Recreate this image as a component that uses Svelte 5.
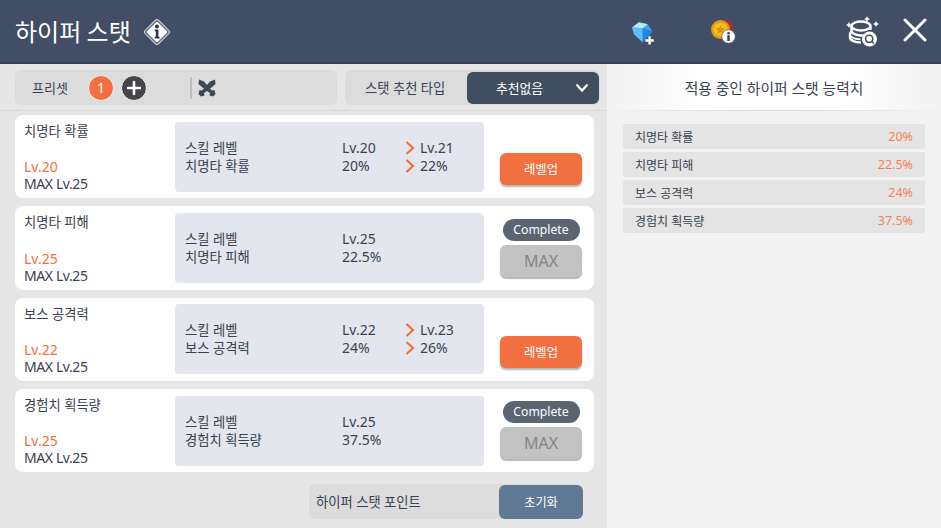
<script>
  const stats = [
    { name: '치명타 확률', lv: 20, val: '20%', next: 21, nextVal: '22%' },
    { name: '치명타 피해', lv: 25, val: '22.5%' },
    { name: '보스 공격력', lv: 22, val: '24%', next: 23, nextVal: '26%' },
    { name: '경험치 획득량', lv: 25, val: '37.5%' }
  ];
</script>

<div class="page">
  <header class="top">
    <div class="title">
      <h1>하이퍼 스탯</h1>
      <svg class="info" width="28" height="28" viewBox="0 0 28 28">
        <rect x="4.500" y="4.500" width="19" height="19" rx="2.500" transform="rotate(45 14 14)" fill="#6d7788" stroke="#d3d7de" stroke-width="1"/>
        <rect x="6.500" y="6.500" width="15" height="15" rx="1.500" transform="rotate(45 14 14)" fill="#fff"/>
        <circle cx="14" cy="8.400" r="2" fill="#2c3548"/>
        <path d="M11.800 11.400h3.600v7.400h1.200v1.800h-5v-1.800h1.200v-5.600h-1z" fill="#2c3548"/>
      </svg>
    </div>
    <div class="icons">
      <svg class="gem" width="26" height="26" viewBox="0 0 28 28">
        <path d="M1 8 8.500 2.500 18 4.500 23 12 12.500 24 3.500 15.500z" fill="#3ea4ee"/>
        <path d="M1 8 8.500 2.500 18 4.500 12.500 9z" fill="#b4e8fc"/>
        <path d="M1 8 12.500 9 12.500 24 3.500 15.500z" fill="#5cc0f5"/>
        <path d="M12.500 9 23 12 12.500 24z" fill="#2384e2"/>
        <path d="M15.500 20.700h3.200v-3.200h2.600v3.200h3.200v2.600h-3.200v3.200h-2.600v-3.200h-3.200z" fill="#fff"/>
      </svg>
      <svg class="coin" width="28" height="28" viewBox="0 0 28 28">
        <path d="M12 2.500c5-1.500 11 1 12.500 8l-4 5L12 12z" fill="#b82a24"/>
        <circle cx="11.500" cy="11.500" r="9.500" fill="#e29a12"/>
        <circle cx="11.500" cy="11.500" r="7" fill="#f5bf24"/>
        <path d="m11.500 7 1.300 3 3.200.3-2.400 2.100.7 3.100-2.800-1.600-2.800 1.600.7-3.100-2.400-2.100 3.200-.3z" fill="#e58a12"/>
        <circle cx="19.500" cy="18.500" r="6.800" fill="#fff" stroke="#3f4a5e" stroke-width=".6"/>
        <circle cx="19.500" cy="15.200" r="1.300" fill="#3a4150"/>
        <rect x="18.300" y="17.200" width="2.400" height="5.800" fill="#3a4150"/>
      </svg>
      <svg class="coins" width="34" height="34" viewBox="0 0 34 34">
        <path d="M4 8l1 2 2 1-2 1-1 2-1-2-2-1 2-1zM22 2l1 2 2 1-2 1-1 2-1-2-2-1 2-1zM31 7l1 2 2 1-2 1-1 2-1-2-2-1 2-1z" fill="#fff"/>
        <ellipse cx="16" cy="12" rx="9.500" ry="4.500" fill="none" stroke="#fff" stroke-width="2.400"/>
        <path d="M6.500 12.500v4.500c0 2 3.500 4 9 4.500 2 .1 4-.2 5.500-.7M25.500 13v3" fill="none" stroke="#fff" stroke-width="2.400"/>
        <path d="M6.500 17.500c-1.200 1-1.500 2-1.500 3v3c0 3 5 5 11 5" fill="none" stroke="#fff" stroke-width="2.400"/>
        <path d="M6 22.500c2.500 2 6 2.800 9.500 2.800" fill="none" stroke="#fff" stroke-width="2"/>
        <circle cx="24.500" cy="25" r="7.500" fill="#fff"/>
        <circle cx="24.200" cy="24.800" r="3.600" fill="none" stroke="#414e65" stroke-width="1.600"/>
        <path d="M26.800 27.300 29 29.500" stroke="#414e65" stroke-width="1.600"/>
      </svg>
      <svg class="close" width="24" height="24" viewBox="0 0 24 24">
        <path d="M2 2 22 22M22 2 2 22" stroke="#fff" stroke-width="3" stroke-linecap="round"/>
      </svg>
    </div>
  </header>

  <div class="body">
    <main class="left">
      <div class="toolbar">
        <div class="preset">
          <span class="preset-label">프리셋</span>
          <span class="badge">1</span>
          <span class="plus">
            <svg width="14" height="14" viewBox="0 0 14 14"><path d="M7 1v12M1 7h12" stroke="#fff" stroke-width="2.600" stroke-linecap="round"/></svg>
          </span>
          <span class="sep"></span>
          <svg class="swords" width="20" height="20" viewBox="0 0 20 20">
            <path d="M2 1.500 7 3.500 10 7 13 3.500 18 1.500 18.500 6 14.500 9.500 13 10.500 15 12.500 17.500 12 18.500 16 16 18.500 12.500 17.500 13 15 10 13 7 15 7.500 17.500 4 18.500 1.500 16 2.500 12 5 12.500 7 10.500 5.500 9.500 1.500 6z" fill="#3f4754"/>
          </svg>
        </div>
        <div class="recommend">
          <span class="rec-label">스탯 추천 타입</span>
          <div class="select">
            <span>추천없음</span>
            <svg width="14" height="10" viewBox="0 0 14 10"><path d="M1.500 1.500 7 7.500l5.500-6" fill="none" stroke="#fff" stroke-width="2.200"/></svg>
          </div>
        </div>
      </div>

      <div class="rows">
        {#each stats as s}
          <section class="row">
            <div class="info-col">
              <div class="name">{s.name}</div>
              <div class="levels">
                <div class="cur">Lv.{s.lv}</div>
                <div class="maxlv">MAX Lv.25</div>
              </div>
            </div>
            <div class="detail">
              <div class="d-labels">
                <div>스킬 레벨</div>
                <div>{s.name}</div>
              </div>
              <div class="d-cur">
                <div>Lv.{s.lv}</div>
                <div>{s.val}</div>
              </div>
              {#if s.next}
                <div class="d-next">
                  <div><svg width="10" height="14" viewBox="0 0 10 14"><path d="M1.500 1 8 7l-6.500 6" fill="none" stroke="#f2703f" stroke-width="2.200"/></svg>Lv.{s.next}</div>
                  <div><svg width="10" height="14" viewBox="0 0 10 14"><path d="M1.500 1 8 7l-6.500 6" fill="none" stroke="#f2703f" stroke-width="2.200"/></svg>{s.nextVal}</div>
                </div>
              {/if}
            </div>
            <div class="action">
              {#if s.next}
                <button class="btn up">레벨업</button>
              {:else}
                <span class="complete">Complete</span>
                <button class="btn max">MAX</button>
              {/if}
            </div>
          </section>
        {/each}
      </div>

      <div class="footer">
        <div class="points">
          <span>하이퍼 스탯 포인트</span>
          <button class="reset">초기화</button>
        </div>
      </div>
    </main>

    <aside class="right">
      <h2>적용 중인 하이퍼 스탯 능력치</h2>
      <ul>
        {#each stats as s}
          <li><span>{s.name}</span><b>{s.val}</b></li>
        {/each}
      </ul>
    </aside>
  </div>
</div>

<style>
  :global(body) { margin: 0; }
  .page {
    width: 941px;
    height: 528px;
    display: flex;
    flex-direction: column;
    overflow: hidden;
    font-family: "Noto Sans", "Noto Sans CJK KR", sans-serif;
    color: #3a424f;
    font-size: 14px;
  }
  .top {
    height: 62px;
    flex: none;
    background: #414e65;
    border-bottom: 2px solid #353f52;
    display: flex;
    align-items: center;
    justify-content: space-between;
    padding: 0 14px 0 15px;
  }
  .title { display: flex; align-items: center; gap: 12px; }
  h1 { margin: 0; font-size: 24px; font-weight: 400; color: #fff; line-height: 32px; font-family: "Noto Sans CJK KR", sans-serif; }
  .info { margin-top: 1px; }
  .icons { display: flex; align-items: center; margin-top: 1px; }
  .gem { margin-right: 52px; margin-top: 3px; }
  .coin { margin-right: 108px; margin-top: 1px; }
  .coins { margin-right: 24px; margin-top: -1px; }
  .close { margin-top: -3px; }

  .body { flex: 1; display: flex; min-height: 0; }
  .left {
    width: 607px;
    flex: none;
    box-sizing: border-box;
    background: #e6e6e6;
    padding: 6px 13px 0 15px;
    display: flex;
    flex-direction: column;
  }
  .toolbar {
    display: flex;
    gap: 8px;
    height: 35px;
    padding: 0 7px 5px 15px;
    margin: 0 -13px 0 -15px;
    border-bottom: 1px solid #d8d8d8;
    flex: none;
    box-sizing: content-box;
  }
  .preset {
    width: 322px;
    background: #dcdcdc;
    border-radius: 6px;
    display: flex;
    align-items: center;
  }
  .preset-label { margin-left: 17px; width: 56px; font-size: 13px; }
  .badge, .plus {
    width: 24px;
    height: 24px;
    border-radius: 50%;
    border: 1px solid #f2f2f2;
    display: flex;
    align-items: center;
    justify-content: center;
    color: #fff;
    flex: none;
  }
  .badge { background: #f2703f; font-size: 14px; }
  .plus { background: #46464a; margin-left: 7px; }
  .sep { width: 2px; height: 22px; background: #bcc0c6; margin-left: 43px; }
  .swords { margin-left: 5px; }
  .recommend {
    flex: 1;
    background: #dcdcdc;
    border-radius: 6px;
    display: flex;
    align-items: center;
    justify-content: space-between;
  }
  .rec-label { margin-left: 20px; font-size: 13.300px; }
  .select {
    width: 132px;
    height: 32px;
    margin-right: 1px;
    background: #414e5f;
    border-radius: 6px;
    color: #fff;
    display: flex;
    align-items: center;
    box-sizing: border-box;
    padding: 0 10px 0 29px;
    justify-content: space-between;
    font-size: 12.800px;
  }

  .rows { display: flex; flex-direction: column; gap: 8px; padding-top: 4px; }
  .row {
    height: 83.300px;
    background: #fff;
    border-radius: 8px;
    display: flex;
    align-items: center;
    box-sizing: border-box;
    padding: 0 12px 0 9px;
  }
  .info-col {
    width: 151px;
    height: 100%;
    flex: none;
    display: flex;
    flex-direction: column;
    justify-content: space-between;
    padding: 5px 0 6px;
    box-sizing: border-box;
    line-height: 23px;
  }
  .name { line-height: 23px; font-size: 13.300px; }
  .levels { line-height: 17px; }
  .cur { color: #f2703f; }
  .maxlv { letter-spacing: -.4px; }
  .detail {
    width: 309px;
    height: 70px;
    flex: none;
    background: #e3e6ed;
    border-radius: 4px;
    display: flex;
    align-items: center;
    box-sizing: border-box;
    padding-left: 10px;
    line-height: 18px;
  }
  .d-labels { width: 157px; flex: none; font-size: 13.300px; }
  .d-cur { width: 63px; flex: none; }
  .d-next div { display: flex; align-items: center; gap: 5px; }
  .action {
    flex: 1;
    align-self: stretch;
    display: flex;
    flex-direction: column;
    align-items: center;
    justify-content: flex-end;
    padding: 0 0 13px 16px;
  }
  .btn {
    width: 82px;
    height: 32px;
    border: 0;
    border-radius: 6px;
    font: inherit;
    padding: 0;
    box-shadow: 0 2px 2px rgba(0,0,0,.3);
  }
  .up { background: #f2703f; color: #fff; font-size: 12.300px; }
  .max { background: #c2c2c2; color: #858585; font-size: 16px; box-shadow: 0 2px 1px rgba(0,0,0,.28); }
  .complete {
    width: 77px;
    height: 22px;
    border-radius: 11px;
    background: #5a6472;
    color: #fff;
    font-size: 12.200px;
    line-height: 21px;
    text-align: center;
    margin-bottom: 4px;
  }

  .footer { display: flex; justify-content: flex-end; padding-top: 12px; padding-right: 11px; }
  .points {
    width: 274px;
    height: 35px;
    background: #dcdcdc;
    border-radius: 6px;
    display: flex;
    align-items: center;
    justify-content: space-between;
    padding-left: 7px;
    box-sizing: border-box;
    font-size: 13.300px;
  }
  .reset {
    width: 84px;
    height: 34px;
    border: 0;
    padding: 0;
    border-radius: 6px;
    background: #5f7894;
    color: #fff;
    font: inherit;
    font-size: 12.200px;
  }

  .right { flex: 1; background: #f2f2f2; }
  h2 {
    margin: 0;
    height: 46px;
    font-size: 14.800px;
    font-weight: 400;
    line-height: 49px;
    text-align: center;
    background: linear-gradient(90deg, #f2f2f2 0%, #fff 30%, #fff 70%, #f2f2f2 100%);
    border-bottom: 1px solid;
    border-image: linear-gradient(90deg, #f2f2f2, #d8d8d8 50%, #f2f2f2) 1;
  }
  ul {
    list-style: none;
    margin: 0;
    padding: 13px 16px 0;
    display: flex;
    flex-direction: column;
    gap: 3px;
  }
  li {
    height: 25px;
    background: #e4e4e4;
    border-radius: 3px;
    display: flex;
    align-items: center;
    justify-content: space-between;
    padding: 0 12px;
    font-size: 12px;
  }
  li b { font-weight: 400; color: #f9825a; font-size: 12.500px; }
</style>
